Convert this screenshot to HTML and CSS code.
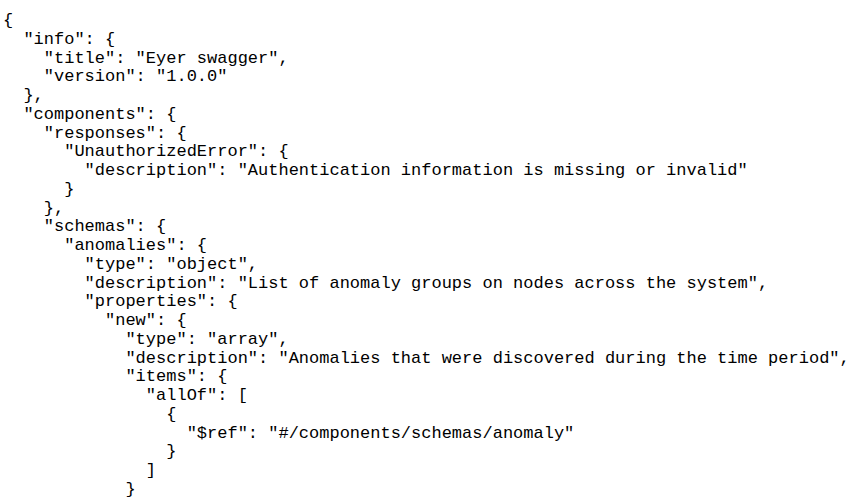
FILE: index.html
```html
<!DOCTYPE html>
<html>
<head>
<meta charset="utf-8">
<link rel="stylesheet" href="styles.css">
</head>
<body>
<pre class="json">{
  "info": {
    "title": "Eyer swagger",
    "version": "1.0.0"
  },
  "components": {
    "responses": {
      "UnauthorizedError": {
        "description": "Authentication information is missing or invalid"
      }
    },
    "schemas": {
      "anomalies": {
        "type": "object",
        "description": "List of anomaly groups on nodes across the system",
        "properties": {
          "new": {
            "type": "array",
            "description": "Anomalies that were discovered during the time period",
            "items": {
              "allOf": [
                {
                  "$ref": "#/components/schemas/anomaly"
                }
              ]
            }</pre>
</body>
</html>
```

FILE: styles.css
```css
html, body {
  margin: 0;
  padding: 0;
  background: #fff;
  overflow: hidden;
}
.json {
  margin: 0;
  padding: 12px 0 0 3px;
  font-family: "Liberation Mono", monospace;
  font-size: 17px;
  line-height: 18.75px;
  color: #000;
  white-space: pre;
}
```
